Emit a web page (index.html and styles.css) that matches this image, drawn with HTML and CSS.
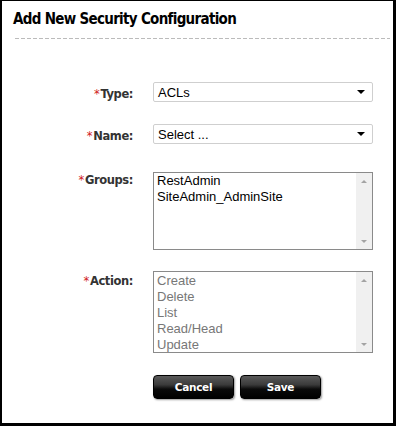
FILE: index.html
```html
<!DOCTYPE html>
<html>
<head>
<meta charset="utf-8">
<link rel="stylesheet" href="styles.css">
</head>
<body>
<div class="dialog">
  <h1 class="title">Add New Security Configuration</h1>
  <div class="rule"></div>
  <div class="form">
    <div class="row row-type">
      <label class="label"><span class="req">*</span>Type:</label>
      <div class="select"><span>ACLs</span><span class="caret"></span></div>
    </div>
    <div class="row row-name">
      <label class="label"><span class="req">*</span>Name:</label>
      <div class="select"><span>Select ...</span><span class="caret"></span></div>
    </div>
    <div class="row row-groups">
      <label class="label"><span class="req">*</span>Groups:</label>
      <div class="listbox groups">
        <ul class="items">
          <li>RestAdmin</li>
          <li>SiteAdmin_AdminSite</li>
        </ul>
        <div class="scroll"><span class="up"></span><span class="down"></span></div>
      </div>
    </div>
    <div class="row row-action">
      <label class="label"><span class="req">*</span>Action:</label>
      <div class="listbox action">
        <ul class="items">
          <li>Create</li>
          <li>Delete</li>
          <li>List</li>
          <li>Read/Head</li>
          <li>Update</li>
        </ul>
        <div class="scroll"><span class="up"></span><span class="down"></span></div>
      </div>
    </div>
    <div class="buttons">
      <button class="btn">Cancel</button>
      <button class="btn">Save</button>
    </div>
  </div>
</div>
</body>
</html>
```
FILE: styles.css
```css
html, body {
  margin: 0;
  padding: 0;
  background: #fff;
}
.dialog {
  box-sizing: border-box;
  width: 396px;
  height: 426px;
  border-top: 1px solid #000;
  border-left: 2px solid #000;
  border-right: 3px solid #000;
  border-bottom: 3px solid #000;
  background: #fff;
  font-family: "DejaVu Sans", Verdana, sans-serif;
}
.title {
  margin: 0;
  padding: 8px 0 0 11px;
  height: 22px;
  font-family: "DejaVu Sans Condensed", "DejaVu Sans", sans-serif;
  font-size: 15px;
  line-height: 20px;
  font-weight: bold;
  color: #000;
  letter-spacing: -0.7px;
}
.rule {
  margin: 7px 3px 0 13px;
  height: 1px;
  background-image: linear-gradient(to right, #bbb 0 4px, transparent 4px 6px);
  background-size: 6px 1px;
  background-repeat: repeat-x;
}
.form {
  padding-top: 43px;
}
.row {
  display: flex;
  align-items: flex-start;
}
.label {
  width: 131px;
  flex: none;
  text-align: right;
  font-size: 11.5px;
  font-weight: bold;
  color: #333;
  letter-spacing: -0.4px;
  margin-right: 20px;
}
.req {
  color: #d02020;
  font-weight: normal;
  margin-right: 1px;
}
.row-type .label, .row-name .label {
  padding-top: 5px;
}
.row-groups .label {
  padding-top: 1px;
}
.row-action .label {
  padding-top: 3px;
}
.row-name { margin-top: 22px; }
.row-groups { margin-top: 28px; }
.row-action { margin-top: 21px; }
.select {
  box-sizing: border-box;
  width: 220px;
  height: 20px;
  border: 1px solid #cfcfcf;
  border-radius: 2px;
  display: flex;
  align-items: center;
  justify-content: space-between;
  padding: 0 7px 0 4px;
  font-family: "Liberation Sans", Arial, sans-serif;
  font-size: 13px;
  color: #000;
}
.caret {
  width: 0;
  height: 0;
  border-left: 4px solid transparent;
  border-right: 4px solid transparent;
  border-top: 4px solid #000;
}
.listbox {
  box-sizing: border-box;
  width: 220px;
  border: 1px solid #8a8a8a;
  display: flex;
  font-family: "Liberation Sans", Arial, sans-serif;
  font-size: 13px;
}
.groups { height: 78px; }
.action { height: 82px; }
.items {
  list-style: none;
  margin: 0;
  padding: 0 0 0 3px;
  flex: 1;
  line-height: 16px;
}
.groups .items { color: #000; padding-top: 0; }
.action .items { color: #777; padding-top: 1px; }
.scroll {
  width: 16px;
  flex: none;
  background: #f0f0f0;
  display: flex;
  flex-direction: column;
  justify-content: space-between;
  align-items: center;
  padding: 7px 0 6px;
  box-sizing: border-box;
}
.up, .down {
  width: 0;
  height: 0;
  border-left: 3px solid transparent;
  border-right: 3px solid transparent;
}
.up { border-bottom: 3px solid #a3a3a3; }
.down { border-top: 3px solid #a3a3a3; }
.buttons {
  display: flex;
  gap: 6px;
  margin: 22px 0 0 151px;
}
.btn {
  box-sizing: border-box;
  width: 81px;
  height: 24px;
  border: 1px solid #000;
  border-radius: 4px;
  background: linear-gradient(to bottom, #5a5a5a 0%, #3a3a3a 40%, #0a0a0a 60%, #000 100%);
  box-shadow: 1px 1px 2px rgba(0,0,0,0.4);
  color: #fff;
  font-family: "DejaVu Sans", Verdana, sans-serif;
  font-size: 10.5px;
  font-weight: bold;
  letter-spacing: -0.3px;
  padding: 0;
}
```
